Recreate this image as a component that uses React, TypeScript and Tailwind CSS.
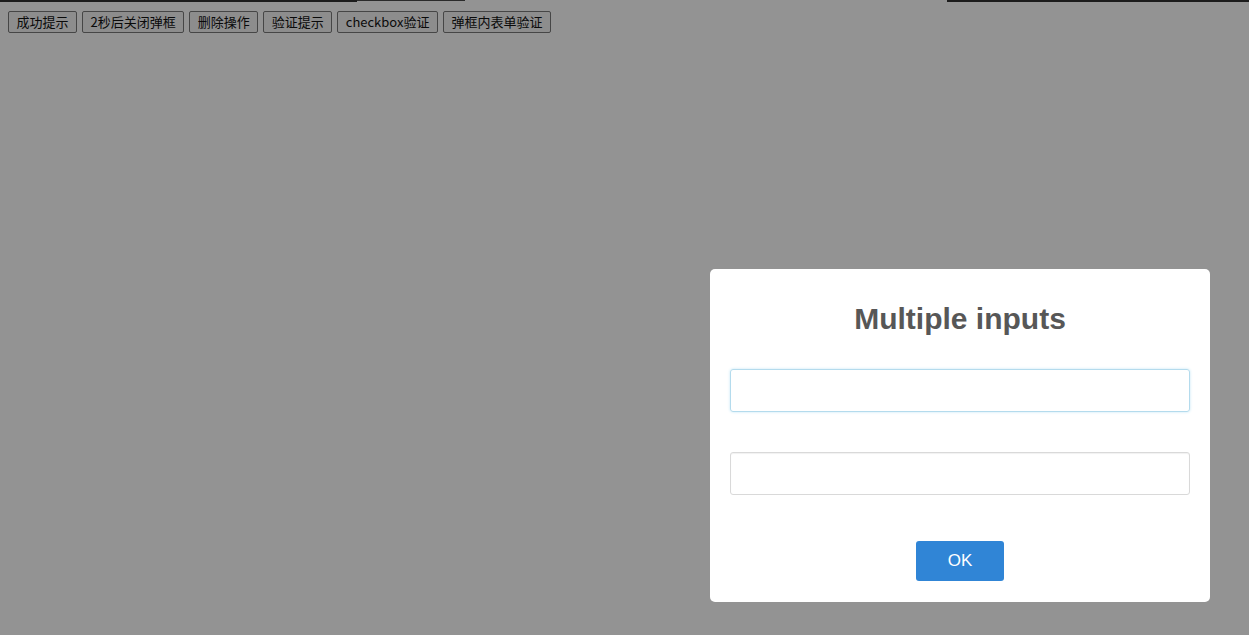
const buttons = ["成功提示", "2秒后关闭弹框", "删除操作", "验证提示", "checkbox验证", "弹框内表单验证"];

export default function App() {
  return (
    <div className="relative w-[1249px] h-[635px] overflow-hidden bg-[#939393] font-['Noto_Sans_CJK_SC','Noto_Sans',sans-serif]">
      {/* top edge */}
      <div className="flex h-[2px]">
        <div className="w-[357px] bg-[#1c1c1c]" />
        <div className="w-[108px] border-t border-[#2a2a2a]" />
        <div className="w-[482px]" />
        <div className="flex-1 bg-[#1c1c1c]" />
      </div>

      {/* page buttons, dimmed by the overlay */}
      <div className="flex gap-[5px] pl-[8px] pt-[9px]">
        {buttons.map((b) => (
          <button
            key={b}
            className="h-[22px] px-[7.5px] border border-[#464646] rounded-[2px] bg-[#8d8d8d] text-[13px] leading-[20px] text-[#0a0a0a]"
          >
            {b}
          </button>
        ))}
      </div>

      {/* modal */}
      <div className="absolute left-[710px] top-[269px] w-[500px] rounded-[5px] bg-white px-[20px] pt-[20px] pb-[21px] flex flex-col items-center font-['Liberation_Sans',Arial,sans-serif]">
        <h2 className="h-[60px] leading-[60px] text-[30px] font-bold text-[#575757]">Multiple inputs</h2>
        <input className="mt-[20px] w-full h-[43px] rounded-[3px] border border-[#b4dbed] shadow-[0_0_3px_#c4e6f5] outline-none" />
        <input className="mt-[40px] w-full h-[43px] rounded-[3px] border border-[#d9d9d9] shadow-[inset_0_1px_1px_rgba(0,0,0,0.06)] outline-none" />
        <button className="mt-[46px] w-[88px] h-[40px] rounded-[3px] bg-[#3085d6] text-white text-[17px]">OK</button>
      </div>
    </div>
  );
}
